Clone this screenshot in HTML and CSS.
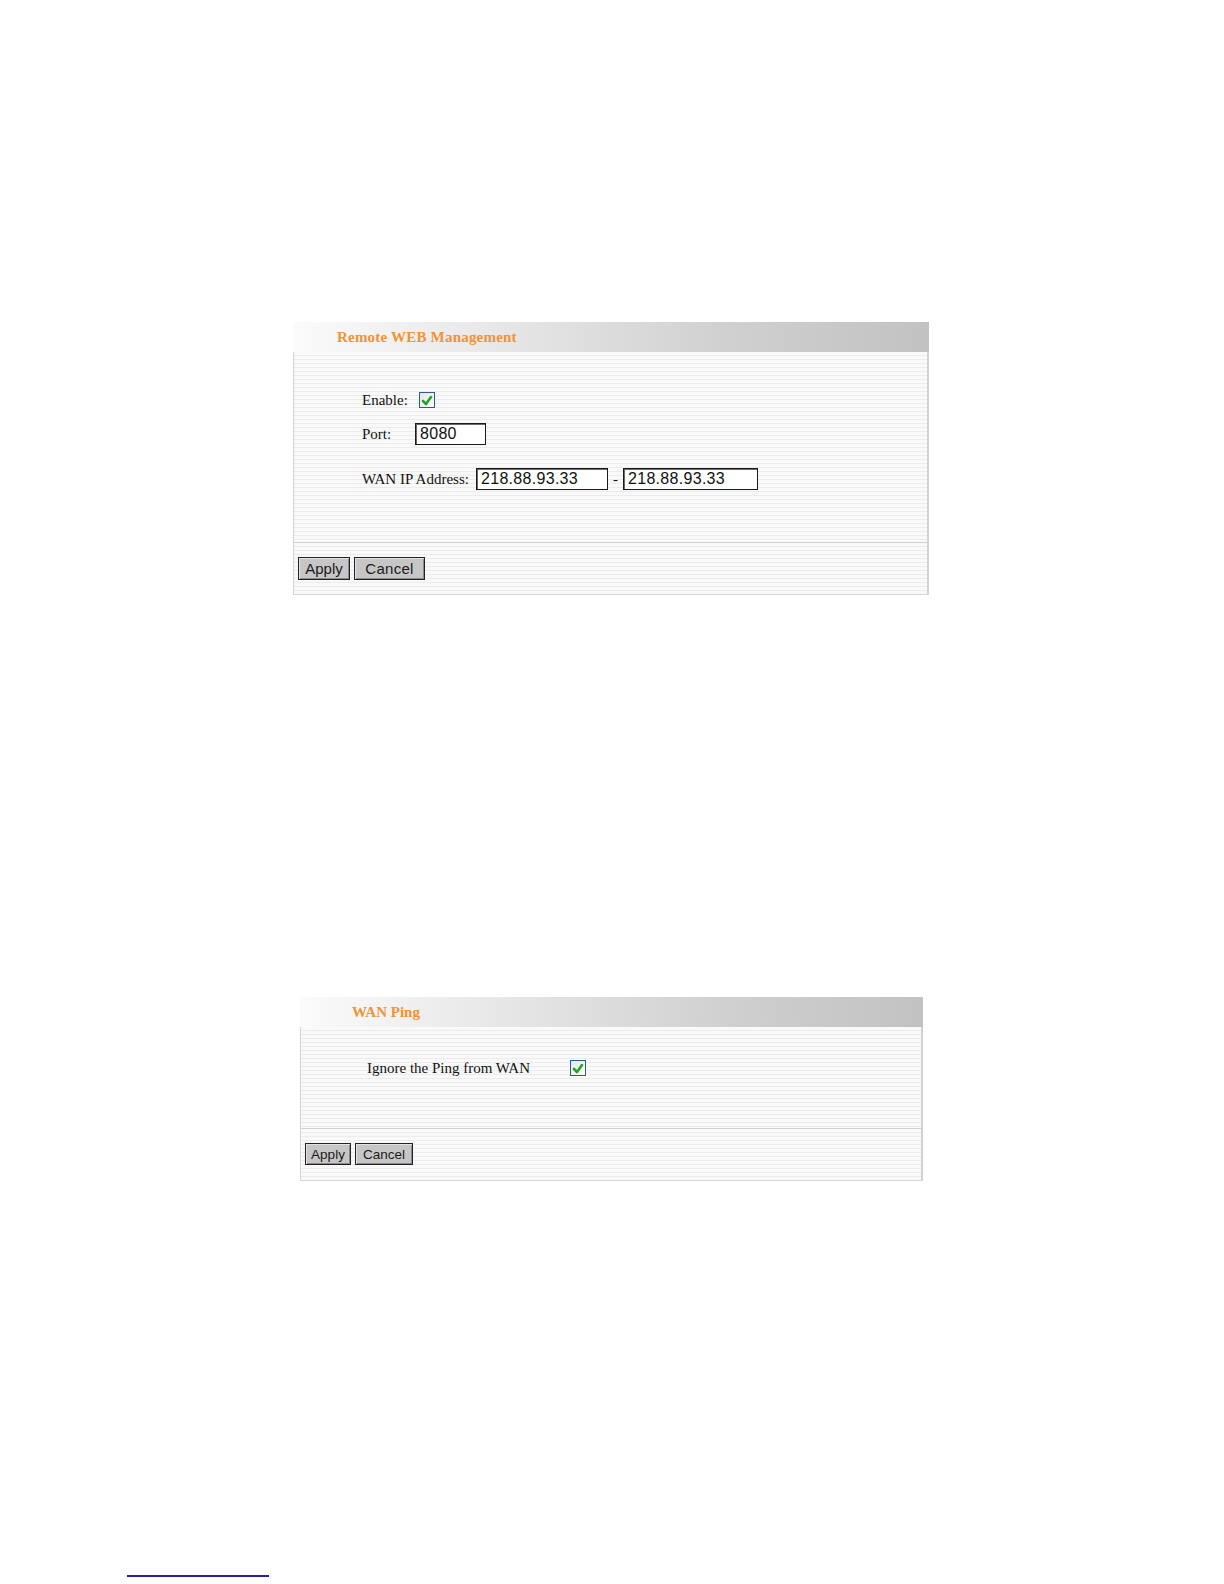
FILE: index.html
```html
<!DOCTYPE html>
<html lang="en">
<head>
    <meta charset="UTF-8">
    <meta name="viewport" content="width=device-width, initial-scale=1.0">
    <title>Remote WEB Management</title>
    <link rel="stylesheet" href="styles.css">
</head>
<body>
    <div class="page">
        <!-- Remote WEB Management -->
        <div class="panel panel-remote">
            <div class="panel-header">Remote WEB Management</div>
            <div class="panel-body">
                <div class="row">
                    <span class="label label-enable">Enable:</span>
                    <span class="check">
                        <svg width="14" height="13" viewBox="0 0 14 13"><polyline points="3,7 6,10 11,3" fill="none" stroke="#1fa52a" stroke-width="2.6" stroke-linecap="round" stroke-linejoin="round"/></svg>
                    </span>
                </div>
                <div class="row row-port">
                    <span class="label label-port">Port:</span>
                    <input type="text" class="field field-port" value="8080">
                </div>
                <div class="row row-wan">
                    <span class="label label-wan">WAN IP Address:</span>
                    <input type="text" class="field field-ip" value="218.88.93.33">
                    <span class="dash">-</span>
                    <input type="text" class="field field-ip field-ip-end" value="218.88.93.33">
                </div>
            </div>
            <div class="panel-footer">
                <button class="btn-apply">Apply</button>
                <button class="btn-cancel">Cancel</button>
            </div>
        </div>

        <!-- WAN Ping -->
        <div class="panel panel-ping">
            <div class="panel-header">WAN Ping</div>
            <div class="panel-body">
                <div class="row">
                    <span class="label label-ping">Ignore the Ping from WAN</span>
                    <span class="check">
                        <svg width="14" height="13" viewBox="0 0 14 13"><polyline points="3,7 6,10 11,3" fill="none" stroke="#1fa52a" stroke-width="2.6" stroke-linecap="round" stroke-linejoin="round"/></svg>
                    </span>
                </div>
            </div>
            <div class="panel-footer">
                <button class="btn-apply">Apply</button>
                <button class="btn-cancel">Cancel</button>
            </div>
        </div>

        <div class="footnote-rule"></div>
    </div>
</body>
</html>
```

FILE: styles.css
```css
/* General Styles */
* {
    box-sizing: border-box;
}

body {
    margin: 0;
    background-color: #ffffff;
    font-family: 'Liberation Serif', 'Times New Roman', serif;
    color: #111;
}

.page {
    padding-top: 322px;
    padding-bottom: 8px;
}

/* Panel Styles */
.panel {
    display: flex;
    flex-direction: column;
}

.panel-remote {
    width: 636px;
    margin-left: 293px;
}

.panel-ping {
    width: 623px;
    margin-left: 300px;
    margin-top: 402px;
}

.panel-header {
    height: 30px;
    line-height: 30px;
    padding-left: 44px;
    background: linear-gradient(to right, #fbfbfb 0%, #e2e2e2 40%, #cfcfcf 70%, #c2c2c2 100%);
    color: #f39236;
    font-weight: bold;
    font-size: 15px;
    letter-spacing: 0.2px;
    white-space: nowrap;
}

.panel-ping .panel-header {
    padding-left: 52px;
    letter-spacing: 0;
}

.panel-body {
    border-left: 1px solid #d4d4d4;
    border-right: 2px solid #d2d2d2;
    background: repeating-linear-gradient(to bottom, #f9f9f9 0px, #f9f9f9 3px, #ececec 3px, #ececec 4px);
}

.panel-remote .panel-body {
    height: 190px;
    padding: 36px 0 0 68px;
}

.panel-ping .panel-body {
    height: 101px;
    padding: 29px 0 0 66px;
}

.panel-footer {
    display: flex;
    gap: 4px;
    height: 53px;
    padding: 14px 0 0 4px;
    border-top: 1px solid #d0d0d0;
    border-left: 1px solid #d4d4d4;
    border-right: 2px solid #d2d2d2;
    border-bottom: 1px solid #d6d6d6;
    background: repeating-linear-gradient(to bottom, #f9f9f9 0px, #f9f9f9 3px, #ececec 3px, #ececec 4px);
}

/* Form Rows */
.row {
    display: flex;
    align-items: center;
    height: 24px;
}

.row-port {
    margin-top: 10px;
}

.row-wan {
    margin-top: 21px;
}

.label {
    font-size: 15px;
    white-space: nowrap;
}

.label-enable {
    width: 57px;
}

.label-port {
    width: 53px;
}

.label-wan {
    width: 114px;
}

.label-ping {
    width: 203px;
}

.check {
    display: flex;
    align-items: center;
    justify-content: center;
    width: 16px;
    height: 16px;
    border: 1px solid #2b5c8a;
    background: linear-gradient(135deg, #e4e4e4, #ffffff);
}

.field {
    height: 22px;
    padding: 0 0 0 4px;
    border: 1px solid #1a1a1a;
    box-shadow: inset 1px 1px 0 #6a6a6a;
    background-color: #ffffff;
    font-family: 'Liberation Sans', Arial, sans-serif;
    font-size: 16px;
    letter-spacing: 0.3px;
    color: #111;
    outline: none;
}

.field-port {
    width: 71px;
}

.field-ip {
    width: 132px;
}

.field-ip-end {
    width: 135px;
}

.dash {
    margin: 0 5px;
    font-size: 15px;
}

/* Button Styles */
button {
    height: 23px;
    padding: 0;
    background-color: #c6c6c6;
    border: 1px solid #222;
    box-shadow: inset 1px 1px 0 #e2e2e2, inset -1px -1px 0 #8a8a8a;
    font-family: 'Liberation Sans', Arial, sans-serif;
    font-size: 15px;
    color: #1a1a1a;
    cursor: pointer;
}

.panel-remote .btn-apply {
    width: 52px;
}

.panel-remote .btn-cancel {
    width: 71px;
    letter-spacing: 0.3px;
}

.panel-ping button {
    height: 22px;
    font-size: 13.5px;
}

.panel-ping .btn-apply {
    width: 46px;
}

.panel-ping .btn-cancel {
    width: 58px;
}

/* Footnote */
.footnote-rule {
    width: 142px;
    height: 2px;
    margin: 394px 0 0 127px;
    background-color: #23239a;
}
```
